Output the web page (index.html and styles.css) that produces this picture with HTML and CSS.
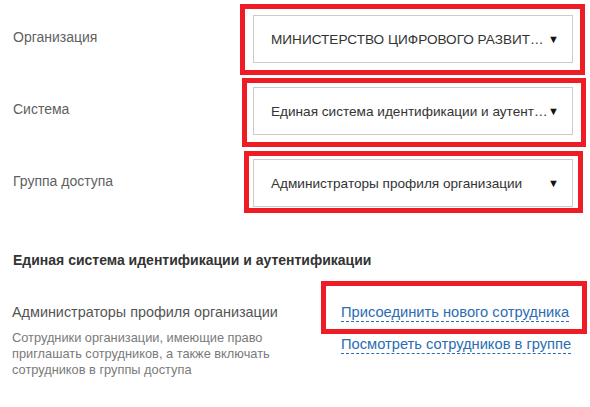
FILE: index.html
```html
<!DOCTYPE html>
<html lang="ru">
<head>
<meta charset="utf-8">
<link rel="stylesheet" href="styles.css">
</head>
<body>
<div class="page">
  <div class="form">
    <div class="label">Организация</div>
    <div class="field">
      <div class="select"><span class="value">МИНИСТЕРСТВО ЦИФРОВОГО РАЗВИТИЯ, СВЯЗИ И МАССОВЫХ КОММУНИКАЦИЙ</span><span class="arrow">▼</span></div>
      <div class="hl hl-1"></div>
    </div>
    <div class="label">Система</div>
    <div class="field">
      <div class="select"><span class="value">Единая система идентификации и аутентификации</span><span class="arrow">▼</span></div>
      <div class="hl hl-2"></div>
    </div>
    <div class="label">Группа доступа</div>
    <div class="field">
      <div class="select"><span class="value">Администраторы профиля организации</span><span class="arrow">▼</span></div>
      <div class="hl hl-3"></div>
    </div>
  </div>

  <h2 class="section-title">Единая система идентификации и аутентификации</h2>

  <div class="group">
    <div class="group-info">
      <div class="group-name">Администраторы профиля организации</div>
      <div class="group-desc">Сотрудники организации, имеющие право приглашать сотрудников, а также включать сотрудников в группы доступа</div>
    </div>
    <div class="group-links">
      <div class="link-wrap">
        <a class="link" href="#">Присоединить нового сотрудника</a>
        <div class="hl hl-4"></div>
      </div>
      <div class="link-wrap">
        <a class="link" href="#">Посмотреть сотрудников в группе</a>
      </div>
    </div>
  </div>
</div>
</body>
</html>
```
FILE: styles.css
```css
html, body {
  margin: 0;
  padding: 0;
  background: #ffffff;
}
body {
  font-family: "Liberation Sans", Arial, sans-serif;
  color: #333333;
}
.page {
  padding: 15px 0 0 12px;
  width: 561px;
}
.form {
  display: grid;
  grid-template-columns: 241px 320px;
  row-gap: 24px;
  align-items: center;
}
.label {
  font-size: 14px;
  color: #5f5f5f;
  margin-top: -4px;
  padding-left: 1px;
}
.field {
  position: relative;
}
.select {
  box-sizing: border-box;
  height: 48px;
  border: 1px solid #cccccc;
  display: flex;
  align-items: center;
  padding: 0 16px 0 17px;
  font-size: 13.6px;
  color: #333333;
  background: #fff;
}
.value {
  flex: 1;
  min-width: 0;
  white-space: nowrap;
  overflow: hidden;
  text-overflow: ellipsis;
}
.arrow {
  font-size: 11px;
  color: #111;
  width: 8px;
  flex: none;
}
.hl {
  position: absolute;
  border: 5px solid #ee1d25;
  pointer-events: none;
}
.hl-1 { top: -11px; left: -13px; right: -12px; bottom: -12px; }
.hl-2 { top: -9px; left: -11px; right: -13px; bottom: -12px; }
.hl-3 { top: -8px; left: -9px; right: -10px; bottom: -6px; }
.hl-4 { top: -22px; left: -20px; right: -16px; bottom: -13px; }
.section-title {
  margin: 44px 0 0 1px;
  font-size: 14px;
  font-weight: bold;
  color: #333333;
  line-height: 18px;
}
.group {
  display: flex;
  margin-top: 34px;
}
.group-info {
  width: 329px;
  flex: none;
}
.group-name {
  font-size: 14.4px;
  color: #555555;
  line-height: 18px;
}
.group-desc {
  margin-top: 9px;
  font-size: 12.8px;
  line-height: 16px;
  color: #7a7a7a;
  width: 275px;
}
.group-links {
  display: flex;
  flex-direction: column;
  gap: 14px;
}
.link-wrap {
  position: relative;
}
.link {
  font-size: 14.7px;
  color: #2a6db3;
  text-decoration: none;
  border-bottom: 1px dashed #2a6db3;
  line-height: 18px;
  padding-bottom: 1px;
}
```
